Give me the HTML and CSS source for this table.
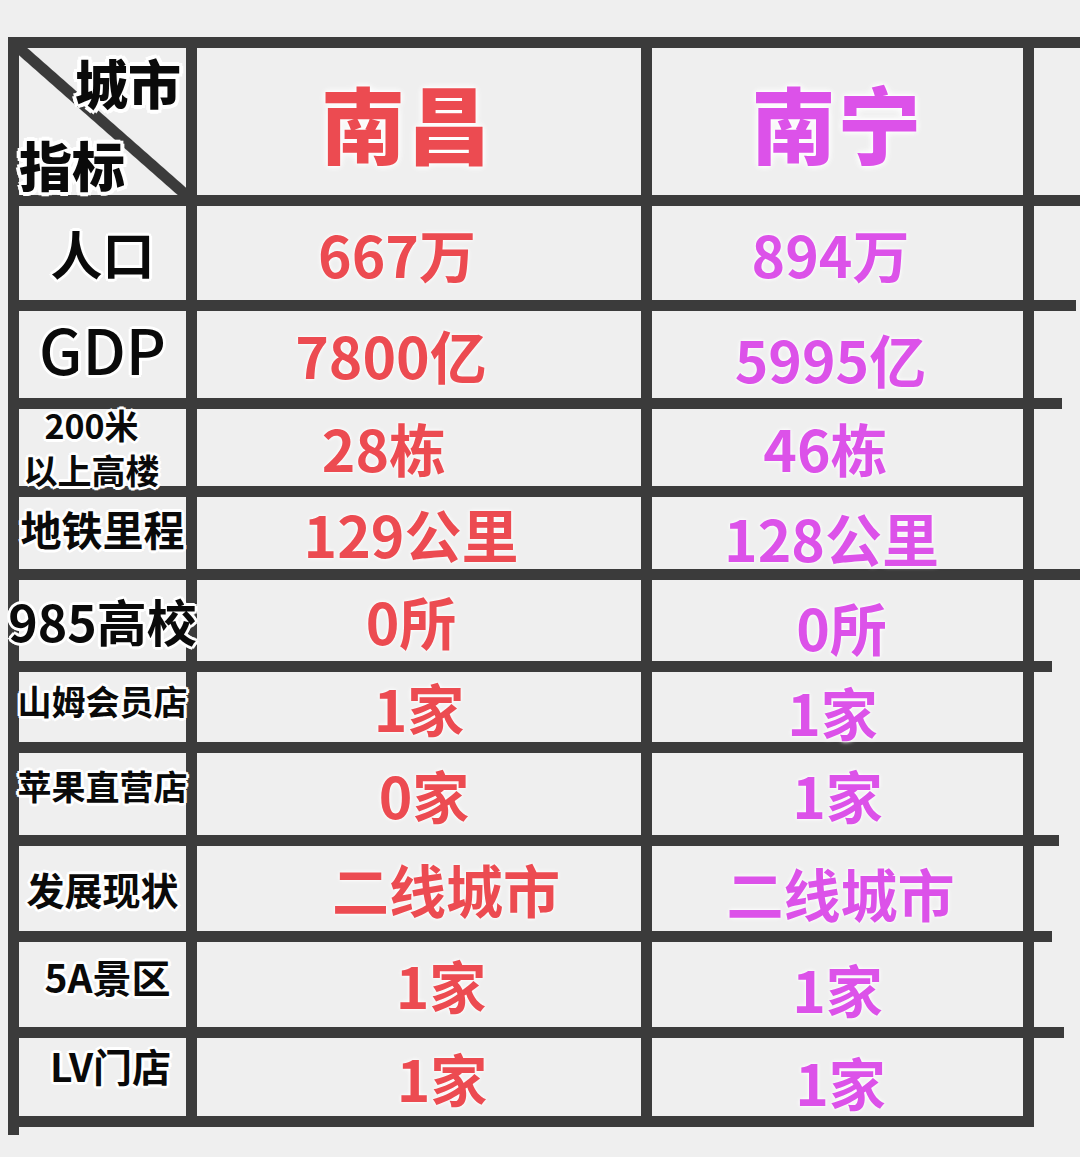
FILE: index.html
```html
<!DOCTYPE html>
<html lang="zh-CN">
<head>
<meta charset="utf-8">
<title>南昌 vs 南宁</title>
<link rel="stylesheet" href="styles.css">
</head>
<body>
<div class="sheet">
  <div class="row head to-1080">
    <div class="c1 corner"><span class="t-city">城市</span><span class="t-ind">指标</span></div>
    <div class="c2"><span class="title red nl-12">南昌</span></div>
    <div class="c3"><span class="title pink">南宁</span></div>
    <div class="c4"></div>
  </div>
  <div class="row r-pop to-1076">
    <div class="c1"><span class="lab s52">人口</span></div>
    <div class="c2"><span class="val red nl-22">667万</span></div>
    <div class="c3"><span class="val pink nl-7">894万</span></div>
    <div class="c4"></div>
  </div>
  <div class="row r-gdp to-1062">
    <div class="c1"><span class="lab s62 up6">GDP</span></div>
    <div class="c2"><span class="val red nl-28">7800亿</span></div>
    <div class="c3"><span class="val pink nl-7 dn4">5995亿</span></div>
    <div class="c4"></div>
  </div>
  <div class="row r-tall to-1034">
    <div class="c1"><span class="lab s34 two nl-11">200米<br>以上高楼</span></div>
    <div class="c2"><span class="val red nl-35">28栋</span></div>
    <div class="c3"><span class="val pink nl-12">46栋</span></div>
    <div class="c4"></div>
  </div>
  <div class="row r-metro to-1080">
    <div class="c1"><span class="lab s41 up4">地铁里程</span></div>
    <div class="c2"><span class="val red nl-8">129公里</span></div>
    <div class="c3"><span class="val pink nl-6 dn4">128公里</span></div>
    <div class="c4"></div>
  </div>
  <div class="row r-985 to-1052">
    <div class="c1"><span class="lab s50 over">985高校</span></div>
    <div class="c2"><span class="val red nl-8">0所</span></div>
    <div class="c3"><span class="val pink nr-4 dn6">0所</span></div>
    <div class="c4"></div>
  </div>
  <div class="row r-sam to-1034">
    <div class="c1"><span class="lab s34 over up6">山姆会员店</span></div>
    <div class="c2"><span class="val red">1家</span></div>
    <div class="c3"><span class="val pink nl-5 dn4">1家</span></div>
    <div class="c4"></div>
  </div>
  <div class="row r-apple to-1059">
    <div class="c1"><span class="lab s34 up8">苹果直营店</span></div>
    <div class="c2"><span class="val red nr-5">0家</span></div>
    <div class="c3"><span class="val pink">1家</span></div>
    <div class="c4"></div>
  </div>
  <div class="row r-dev to-1052">
    <div class="c1"><span class="lab s38">发展现状</span></div>
    <div class="c2"><span class="val red nr-27">二线城市</span></div>
    <div class="c3"><span class="val pink nr-3 dn4">二线城市</span></div>
    <div class="c4"></div>
  </div>
  <div class="row r-5a to-1064">
    <div class="c1"><span class="lab s39 nr-5 up8">5A景区</span></div>
    <div class="c2"><span class="val red nr-22">1家</span></div>
    <div class="c3"><span class="val pink dn4">1家</span></div>
    <div class="c4"></div>
  </div>
  <div class="row r-lv to-1034">
    <div class="c1"><span class="lab s39 nr-8 up12">LV门店</span></div>
    <div class="c2"><span class="val red nr-23">1家</span></div>
    <div class="c3"><span class="val pink nr-3 dn4">1家</span></div>
    <div class="c4"></div>
  </div>
  <div class="tail"></div>
</div>
</body>
</html>
```

FILE: styles.css
```css
html, body {
  margin: 0;
  padding: 0;
}
body {
  width: 1080px;
  height: 1157px;
  overflow: hidden;
  background: #efefef;
  font-family: "Noto Sans CJK SC", "Noto Sans", sans-serif;
  color: #0a0a0a;
}
.sheet {
  margin: 37px 0 0 8px;
  display: flex;
  flex-direction: column;
}
.row {
  display: flex;
  border-bottom: 11px solid #3b3b3b;
  box-sizing: content-box;
}
.head {
  border-top: 11px solid #3b3b3b;
  height: 147px;
}
.r-pop { height: 94px; }
.r-gdp { height: 87px; }
.r-tall { height: 77px; }
.r-metro { height: 72px; }
.r-985 { height: 81px; }
.r-sam { height: 70px; }
.r-apple { height: 82px; }
.r-dev { height: 85px; }
.r-5a { height: 85px; }
.r-lv { height: 78px; }
.tail {
  width: 11px;
  height: 8px;
  background: #3b3b3b;
}

.to-1080 { width: 1072px; }
.to-1076 { width: 1068px; }
.to-1064 { width: 1056px; }
.to-1062 { width: 1054px; }
.to-1059 { width: 1051px; }
.to-1052 { width: 1044px; }
.to-1034 { width: 1026px; }

.c1, .c2, .c3 {
  box-sizing: border-box;
  display: flex;
  align-items: center;
  justify-content: center;
  flex: none;
  border-right: 11px solid #3b3b3b;
}
.c1 {
  width: 189px;
  border-left: 11px solid #3b3b3b;
}
.c2 { width: 455px; }
.c3 { width: 382px; }
.c4 { flex: 1; }

.corner {
  flex-direction: column;
  justify-content: space-between;
  align-items: stretch;
  padding: 8px 5px 4px 0;
  background: linear-gradient(to top right,
    transparent calc(50% - 6px),
    #3b3b3b calc(50% - 5px),
    #3b3b3b calc(50% + 5px),
    transparent calc(50% + 6px));
}
.t-city, .t-ind {
  font-size: 53px;
  font-weight: 900;
  line-height: 1;
  text-shadow: -3px -3px 0 #fff, 3px -3px 0 #fff, -3px 3px 0 #fff, 3px 3px 0 #fff,
    0 -4px 0 #fff, 0 4px 0 #fff, -4px 0 0 #fff, 4px 0 0 #fff;
}
.t-city { align-self: flex-end; }
.t-ind { align-self: flex-start; }

.lab {
  font-weight: 700;
  line-height: 1.1;
  text-align: center;
  white-space: nowrap;
  text-shadow: -2px -2px 0 #fff, 2px -2px 0 #fff, -2px 2px 0 #fff, 2px 2px 0 #fff,
    0 -3px 0 #fff, 0 3px 0 #fff, -3px 0 0 #fff, 3px 0 0 #fff;
}
.lab.two { line-height: 1.3; font-weight: 600; }
.over { position: relative; z-index: 1; }
.s34 { font-size: 34px; }
.s38 { font-size: 38px; }
.s39 { font-size: 39px; }
.s41 { font-size: 41px; }
.s50 { font-size: 50px; font-weight: 600; }
.s52 { font-size: 52px; font-weight: 600; }
.s62 { font-size: 62px; font-weight: 500; }

.title {
  font-size: 84px;
  font-weight: 900;
  line-height: 1;
  letter-spacing: 2px;
  text-shadow: 0 0 3px #fff, 0 0 6px #fff, 0 0 8px #fff;
}
.val {
  font-size: 57px;
  font-weight: 700;
  line-height: 1;
  white-space: nowrap;
  text-shadow: 0 0 3px #fff, 0 0 5px #fff;
}
.red { color: #ec4b51; }
.pink { color: #dc52e9; }

.nl-5 { margin-right: 10px; }
.nl-6 { margin-right: 12px; }
.nl-7 { margin-right: 14px; }
.nl-8 { margin-right: 16px; }
.nl-11 { margin-right: 22px; }
.nl-12 { margin-right: 24px; }
.nl-22 { margin-right: 44px; }
.nl-28 { margin-right: 56px; }
.nl-35 { margin-right: 70px; }
.nr-3 { margin-left: 6px; }
.nr-4 { margin-left: 8px; }
.nr-5 { margin-left: 10px; }
.nr-8 { margin-left: 16px; }
.nr-22 { margin-left: 44px; }
.nr-23 { margin-left: 46px; }
.nr-27 { margin-left: 54px; }
.up4 { margin-bottom: 8px; }
.up6 { margin-bottom: 12px; }
.up8 { margin-bottom: 16px; }
.up12 { margin-bottom: 24px; }
.dn4 { margin-top: 8px; }
.dn6 { margin-top: 12px; }
```
